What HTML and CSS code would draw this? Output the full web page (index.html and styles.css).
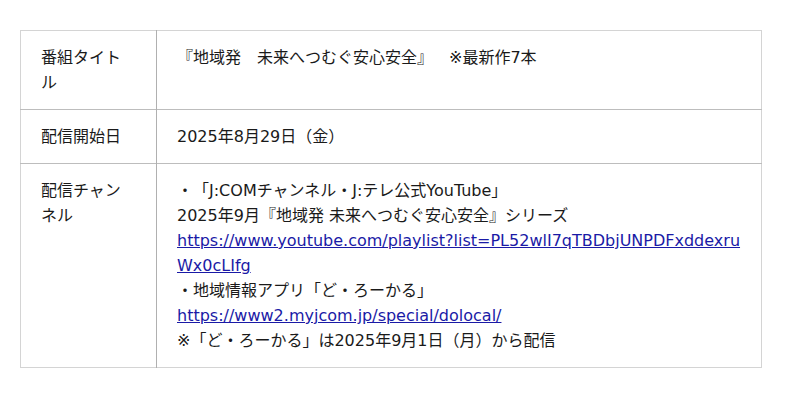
FILE: index.html
```html
<!DOCTYPE html>
<html lang="ja">
<head>
<meta charset="utf-8">
<link rel="stylesheet" href="styles.css">
</head>
<body>
<div class="wrap">
<table class="info">
<tr>
<th>番組タイトル</th>
<td>『地域発　未来へつむぐ安心安全』　※最新作7本</td>
</tr>
<tr>
<th>配信開始日</th>
<td>2025年8月29日（金）</td>
</tr>
<tr>
<th>配信チャンネル</th>
<td>・「J:COMチャンネル・J:テレ公式YouTube」<br>2025年9月『地域発 未来へつむぐ安心安全』シリーズ<br><a class="url" href="#">https://www.youtube.com/playlist?list=PL52wlI7qTBDbjUNPDFxddexruWx0cLIfg</a><br>・地域情報アプリ「ど・ろーかる」<br><a class="url" href="#">https://www2.myjcom.jp/special/dolocal/</a><br>※「ど・ろーかる」は2025年9月1日（月）から配信</td>
</tr>
</table>
</div>
</body>
</html>
```
FILE: styles.css
```css
html, body {
  margin: 0;
  padding: 0;
  background: #fff;
}
.wrap {
  padding: 30px 20px;
}
.info {
  width: 742px;
  border-collapse: collapse;
  font-family: "DejaVu Sans", "Noto Sans CJK JP", sans-serif;
  font-size: 16px;
  line-height: 25px;
  color: #1a1a1a;
  border: 1px solid #d4d4d4;
  text-spacing-trim: space-all;
}
.info th,
.info td {
  padding: 14px 20px;
  text-align: left;
  vertical-align: top;
  font-weight: normal;
  border-top: 1px solid #bdbdbd;
}
.info tr:first-child th,
.info tr:first-child td {
  border-top: 1px solid #d4d4d4;
}
.info th {
  width: 95px;
  border-right: 1px solid #b0b0b0;
}
.info td {
  word-break: break-all;
}
.url {
  color: #1a1aa6;
  text-decoration: underline;
}
```
